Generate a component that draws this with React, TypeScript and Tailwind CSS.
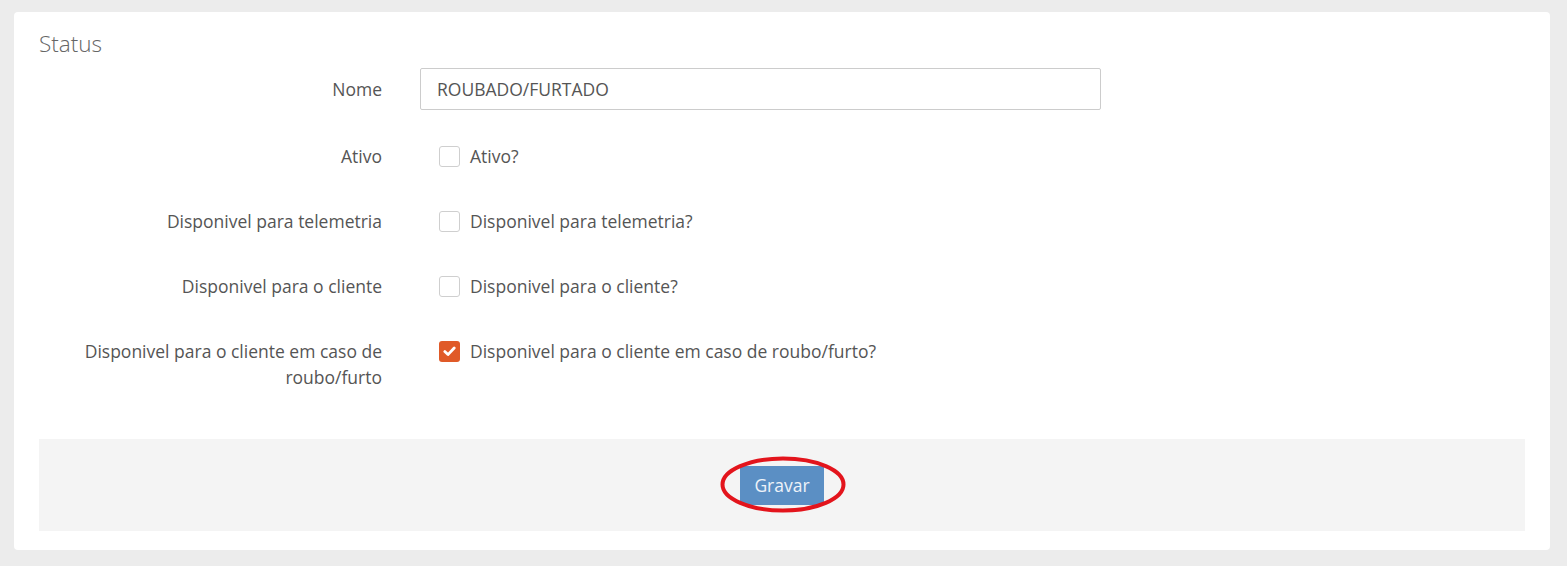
import React from "react";

function Check({ checked }: { checked?: boolean }) {
  return checked ? (
    <span className="flex h-[21px] w-[21px] shrink-0 items-center justify-center rounded-[3px] bg-[#e05a28]">
      <svg width="13" height="11" viewBox="0 0 13 11">
        <path d="M1.8 5.6 L5 8.6 L11.2 2" fill="none" stroke="#fff" strokeWidth="2.8" strokeLinecap="round" strokeLinejoin="round" />
      </svg>
    </span>
  ) : (
    <span className="h-[21px] w-[21px] shrink-0 rounded-[3px] border border-[#cfcfcf] bg-white" />
  );
}

function CheckRow({ label, text, checked, className }: { label: string; text: string; checked?: boolean; className?: string }) {
  return (
    <div className={"flex items-start " + (className ?? "")}>
      <div className="w-[358px] shrink-0 pl-[15px] pr-[15px] text-right leading-[26px]">{label}</div>
      <div className="flex items-start pl-[42px]">
        <div className="flex h-[26px] items-center">
          <Check checked={checked} />
        </div>
        <span className="ml-[10px] leading-[26px]">{text}</span>
      </div>
    </div>
  );
}

export default function App() {
  return (
    <div
      className="min-h-[566px] w-full bg-[#ececec] pt-[12px] pl-[14px] pr-[17px] pb-[16px] text-[17.5px] text-[#555555]"
      style={{ fontFamily: '"Open Sans", "Noto Sans", sans-serif' }}
    >
      <div className="rounded-[4px] bg-white px-[25px] pt-[18px] pb-[19px]">
        <h1 className="text-[22.5px] font-light leading-[28px] text-[#666666]">Status</h1>
        <div className="mt-[10px] flex items-center">
          <div className="w-[358px] shrink-0 pr-[15px] text-right">Nome</div>
          <div className="ml-[23px] w-[681px]">
            <div className="flex h-[42px] items-center rounded-[2px] border border-[#cccccc] px-[16px]">ROUBADO/FURTADO</div>
          </div>
        </div>
        <CheckRow className="mt-[33px]" label="Ativo" text="Ativo?" />
        <CheckRow className="mt-[39px]" label="Disponivel para telemetria" text="Disponivel para telemetria?" />
        <CheckRow className="mt-[39px]" label="Disponivel para o cliente" text="Disponivel para o cliente?" />
        <CheckRow
          className="mt-[39px]"
          label="Disponivel para o cliente em caso de roubo/furto"
          text="Disponivel para o cliente em caso de roubo/furto?"
          checked
        />
        <div className="mt-[49px] flex h-[92px] items-center justify-center bg-[#f4f4f4]">
          <div className="relative">
            <button className="h-[39px] w-[84px] bg-[#5b8fc4] text-[17.5px] text-[#eef3f9]">Gravar</button>
            <svg
              className="pointer-events-none absolute left-[-20px] top-[-10px]"
              width="128"
              height="60"
              viewBox="0 0 128 60"
            >
              <ellipse cx="63" cy="28.5" rx="60.5" ry="26" fill="none" stroke="#e3141c" strokeWidth="4" />
            </svg>
          </div>
        </div>
      </div>
    </div>
  );
}
